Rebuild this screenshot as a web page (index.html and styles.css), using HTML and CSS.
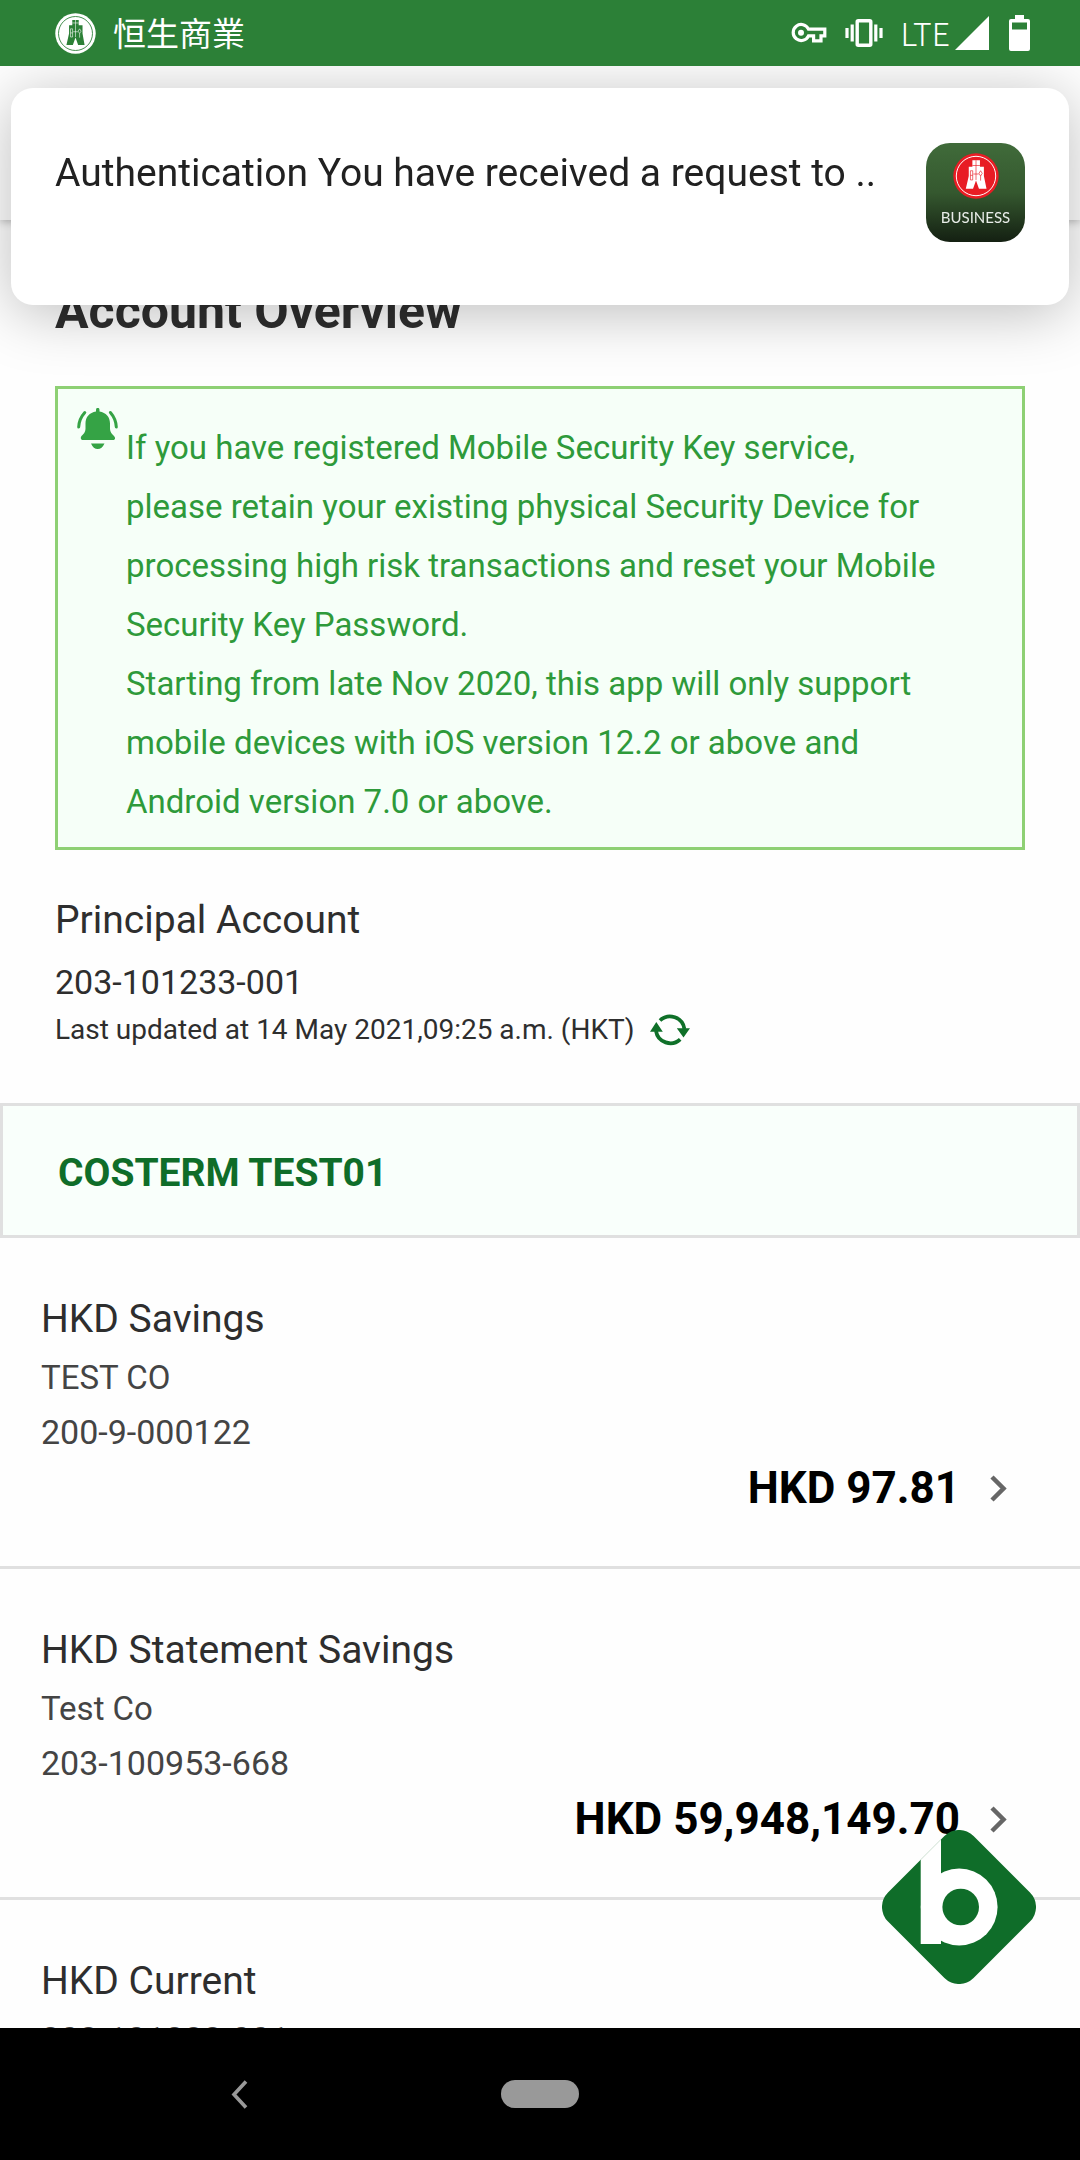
FILE: index.html
```html
<!DOCTYPE html>
<html lang="en">
<head>
<meta charset="utf-8">
<meta name="viewport" content="width=device-width, initial-scale=1">
<title>Account Overview</title>
<link rel="stylesheet" href="styles.css">
</head>
<body>
<div class="status">
  <svg class="status-logo" viewBox="-70 -70 140 140" aria-hidden="true">
    <circle r="69" fill="#fff"/>
    <circle r="58" fill="none" stroke="#2c8037" stroke-width="3"/>
    <path fill="#2c8037" d="M-11-46H11V-28H24V0L31 39H9L0 14-9 39H-31L-22 0V-28H-11Z"/>
    <path fill="none" stroke="#fff" stroke-width="2" d="M0-46V12M-11-36H11M-8-6H8M-17-16h7v28h-7zM-17-2h7M14-16l5 8-5 8-5-8zM14 0v14"/>
  </svg>
  <span class="status-title" lang="zh-Hant">恒生商業</span>
  <svg class="status-key" viewBox="0 0 36 22" aria-hidden="true">
    <path fill="none" stroke="#fff" stroke-width="3.2" d="M17.5 7.2H33.8V13.8H30V18.8H22.6V13.8H17.5A8 8 0 1 1 17.5 7.2Z"/>
    <circle cx="10" cy="10.8" r="3" fill="#fff"/>
  </svg>
  <svg class="status-vibrate" viewBox="0 0 38 28" aria-hidden="true">
    <rect x="12.2" y="1.8" width="13.6" height="24.4" rx="1" fill="none" stroke="#fff" stroke-width="3.4"/>
    <path stroke="#fff" stroke-width="3.2" d="M2 9V19M7.2 5.500V22.500M30.800 5.500V22.500M36 9V19"/>
  </svg>
  <span class="status-net">LTE</span>
  <svg class="status-signal" viewBox="0 0 34 34" aria-hidden="true"><path fill="#fff" d="M34 0V34H0Z"/></svg>
  <svg class="status-battery" viewBox="0 0 21 36" aria-hidden="true">
    <path fill="#fff" fill-rule="evenodd" d="M6 0H15V4H19Q21 4 21 6V34Q21 36 19 36H2Q0 36 0 34V6Q0 4 2 4H6ZM3 7.500V14.500H18V7.500Z"/>
  </svg>
</div>
<header class="appbar"></header>
<main class="main">
  <section class="overview">
    <h1 class="heading">Account Overview</h1>
    <div class="notice">
      <svg class="bell" viewBox="0 0 41 41" aria-hidden="true">
        <path fill="#35a345" d="M19 3.500V2A1.600 2 0 0 1 22.500 2V3.500C29 4.500 33 9 33 15.500V21C33 24 35 26 37 28C39 30 38 32 36 32H6C4 32 3 30 4.500 28C6.500 26 8.500 24 8.500 21V15.500C8.500 9 12.500 4.500 19 3.500ZM14 35.500H27.500Q25 41 20.700 41T14 35.500Z"/>
        <path fill="none" stroke="#35a345" stroke-width="3" stroke-linecap="round" d="M7.800 4.500Q2 11 1.700 19M33.400 4.500Q39 11 39.300 19"/>
      </svg>
      <p class="notice-text">If you have registered Mobile Security Key service, please retain your existing physical Security Device for processing high risk transactions and reset your Mobile Security Key Password.<br>Starting from late Nov 2020, this app will only support mobile devices with iOS version 12.2 or above and Android version 7.0 or above.</p>
    </div>
    <h2 class="label">Principal Account</h2>
    <p class="principal-number number">203-101233-001</p>
    <div class="updated">
      <span>Last updated at 14 May 2021,09:25 a.m. (HKT)</span>
      <button class="refresh" type="button" aria-label="Refresh">
        <svg class="refresh-icon" viewBox="0 0 40 34" aria-hidden="true">
          <path fill="none" stroke="#0f7029" stroke-width="3.800" d="M10 7.500A14.500 14.500 0 0 1 34.400 16M6 18A14.500 14.500 0 0 0 30.200 26.300"/>
          <path fill="#0f7029" d="M26.800 15.200H40L33.500 24.500ZM0 18.700H12.800L6.300 9Z"/>
        </svg>
      </button>
    </div>
  </section>
  <h2 class="company">COSTERM TEST01</h2>
  <a class="account" href="#savings">
    <span class="label">HKD Savings</span>
    <span class="details"><span>TEST CO</span><span class="number">200-9-000122</span></span>
    <span class="balance">HKD 97.81<svg class="chevron" viewBox="0 0 17 27" aria-hidden="true"><path fill="none" stroke="#666" stroke-width="4.500" d="M2 2L13.500 13.500 2 25"/></svg></span>
  </a>
  <a class="account" href="#statement-savings">
    <span class="label">HKD Statement Savings</span>
    <span class="details"><span>Test Co</span><span class="number">203-100953-668</span></span>
    <span class="balance">HKD 59,948,149.70<svg class="chevron" viewBox="0 0 17 27" aria-hidden="true"><path fill="none" stroke="#666" stroke-width="4.500" d="M2 2L13.500 13.500 2 25"/></svg></span>
  </a>
  <a class="account" href="#current">
    <span class="label">HKD Current</span>
    <span class="details"><span class="number">203-101233-001</span></span>
  </a>
</main>
<nav class="navbar">
  <button class="nav-back" type="button" aria-label="Back">
    <svg class="nav-back-icon" viewBox="0 0 17 29" aria-hidden="true"><path fill="none" stroke="#999" stroke-width="3.600" d="M15 1.500L3 14.500 15 27.500"/></svg>
  </button>
  <button class="nav-home" type="button" aria-label="Home"></button>
</nav>
<aside class="toast">
  <p class="toast-text">Authentication You have received a request to ..</p>
  <div class="app-icon">
    <svg class="app-logo" viewBox="-70 -70 140 140" aria-hidden="true">
      <circle r="69" fill="#e81c24"/>
      <circle r="60" fill="none" stroke="#fff" stroke-width="3"/>
      <path fill="#fff" d="M-11-48H12V-28H24V0L32 39H9L0 14-9 39H-31L-22 0V-28H-11Z"/>
      <path fill="none" stroke="#e81c24" stroke-width="2" d="M0-48V12M-11-32H12M-8-6H8M-17-16h7v28h-7zM-17-2h7M14-16l5 8-5 8-5-8zM14 0v14"/>
    </svg>
    <span class="app-name">BUSINESS</span>
  </div>
</aside>
<button class="fab" type="button" aria-label="Business menu">
  <svg class="fab-icon" viewBox="0 0 154 154" aria-hidden="true">
    <defs><clipPath id="diamond"><rect x="16.500" y="16.500" width="121" height="121" rx="20.600" transform="rotate(45 77 77)"/></clipPath></defs>
    <g clip-path="url(#diamond)">
      <rect width="154" height="154" fill="#0f6d29"/>
      <rect x="38.700" width="20.300" height="114" fill="#fff"/>
      <circle cx="77.200" cy="77" r="38.400" fill="#fff"/>
      <path fill="#0f6d29" d="M59 114H50V120H59Z"/>
      <circle cx="78.700" cy="77" r="18.300" fill="#0f6d29"/>
    </g>
  </svg>
</button>
</body>
</html>
```
FILE: styles.css
```css
* { box-sizing: border-box; }

body {
  margin: 0;
  height: 100vh;
  display: flex;
  flex-direction: column;
  overflow: hidden;
  background: #fefefe;
  color: #2e2e2e;
  font-family: Roboto, "Noto Sans CJK TC", sans-serif;
  font-size: 33px;
}

h1, h2, p { margin: 0; font-weight: 400; }
svg { display: block; flex: none; }
button { padding: 0; border: 0; background: none; cursor: pointer; }

.status {
  position: relative;
  z-index: 3;
  flex: none;
  display: flex;
  align-items: center;
  height: 66px;
  padding: 0 50px 0 55px;
  background: #2c8037;
  color: #fff;
}
.status-logo { width: 41px; height: 41px; }
.status-title {
  margin: 0 auto 0 17px;
  padding-bottom: 2px;
  font-family: "Noto Sans CJK TC", sans-serif;
  line-height: 48px;
}
.status-key { width: 36px; height: 22px; margin-right: 18px; }
.status-vibrate { width: 38px; height: 28px; margin-right: 18px; }
.status-net {
  margin-right: 5px;
  padding-bottom: 2px;
  font-family: "Noto Sans CJK TC", sans-serif;
  font-weight: 300;
  font-size: 32px;
  line-height: 48px;
}
.status-signal { width: 34px; height: 34px; margin-right: 20px; }
.status-battery { width: 21px; height: 36px; }

.appbar {
  position: relative;
  flex: none;
  height: 154px;
  background: #fefefe;
  box-shadow: 0 2px 8px rgba(0, 0, 0, .25);
}

.main { flex: 1; min-height: 0; overflow: hidden; }
.overview { padding: 61px 55px 55px; }
.heading { font-size: 50px; font-weight: 700; line-height: 60px; }

.notice {
  display: flex;
  gap: 8px;
  margin: 45px 0 48px;
  padding: 19px 65px 16px 19px;
  border: 3px solid #8ed074;
  background: #f6fff8;
  color: #2e9a3a;
}
.bell { width: 41px; height: 41px; }
.notice-text { padding-top: 10px; line-height: 59px; }

.label { display: block; font-size: 39px; line-height: 44px; }
.number { font-size: 34px; }
.principal-number { margin-top: 18px; line-height: 44px; }
.updated {
  display: flex;
  align-items: center;
  gap: 16px;
  margin-top: 8px;
  font-size: 28px;
  line-height: 36px;
}
.refresh-icon { width: 40px; height: 34px; }

.company {
  padding: 45px 55px 40px;
  border: 3px solid #e0e0e0;
  background: #f9fffb;
  color: #0f6d29;
  font-size: 39px;
  font-weight: 700;
  line-height: 44px;
}

.account {
  display: block;
  padding: 59px 73px 50px 41px;
  border-bottom: 3px solid #e0e0e0;
  color: inherit;
  text-decoration: none;
}
.details {
  display: grid;
  margin-top: 9px;
  color: #444;
  line-height: 55px;
}
.balance {
  display: flex;
  align-items: center;
  justify-content: flex-end;
  gap: 30px;
  color: #000;
  font-size: 44px;
  font-weight: 700;
  line-height: 56px;
}
.chevron { width: 17px; height: 27px; }

.navbar {
  position: relative;
  flex: none;
  display: grid;
  grid-template-columns: 1fr 78px 1fr;
  align-items: center;
  height: 132px;
  background: #000;
}
.nav-back { justify-self: center; margin-right: 22px; padding: 24px; }
.nav-back-icon { width: 17px; height: 29px; }
.nav-home { height: 28px; border-radius: 14px; background: #999; }

.toast {
  position: fixed;
  z-index: 2;
  top: 88px;
  left: 11px;
  right: 11px;
  display: flex;
  justify-content: space-between;
  padding: 55px 44px 63px;
  border-radius: 22px;
  background: #fff;
  box-shadow: 0 8px 60px rgba(0, 0, 0, .26);
  color: #212121;
}
.toast-text { padding-top: 8px; font-size: 39px; line-height: 44px; }
.app-icon {
  display: flex;
  flex-direction: column;
  align-items: center;
  width: 99px;
  height: 99px;
  padding-top: 10px;
  border-radius: 24px;
  background: linear-gradient(#406b3a, #35582f 50%, #142012);
  color: #e8ece8;
}
.app-logo { width: 46px; height: 46px; }
.app-name {
  margin-top: 8px;
  font-family: Lato, sans-serif;
  font-size: 15px;
  line-height: 20px;
}

.fab { position: fixed; z-index: 1; right: 44px; bottom: 176px; }
.fab-icon { width: 154px; height: 154px; }
```
